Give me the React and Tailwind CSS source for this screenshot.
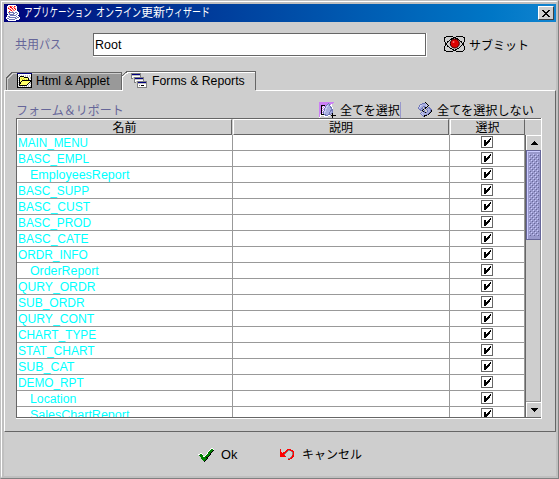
import { useLayoutEffect, useRef } from "react";

const FONT = "font-['Liberation_Sans','Noto_Sans_CJK_JP',sans-serif]";

// Text condensed or widened to occupy a given width.
function Fit({ w, className = "", children }) {
  const ref = useRef(null);
  useLayoutEffect(() => {
    const el = ref.current;
    el.style.transform = "none";
    el.style.transform = `scaleX(${w / el.offsetWidth})`;
  }, [w, children]);
  return (
    <span className={`block shrink-0 whitespace-pre ${className}`} style={{ width: w }}>
      <span ref={ref} className="inline-block origin-left">{children}</span>
    </span>
  );
}

// Pixel icon: one character per pixel, "." is transparent.
function Pixels({ rows, colors, className = "" }) {
  const w = Math.max(...rows.map((r) => r.length));
  return (
    <svg width={w} height={rows.length} viewBox={`0 0 ${w} ${rows.length}`} shapeRendering="crispEdges" className={`block shrink-0 ${className}`}>
      {rows.flatMap((row, y) =>
        [...row].map((c, x) => (colors[c] ? <rect key={`${x}-${y}`} x={x} y={y} width="1" height="1" fill={colors[c]} /> : null))
      )}
    </svg>
  );
}

const C = { k: "#000000", w: "#ffffff", r: "#ff0000", d: "#990000", g: "#008000", e: "#808080", b: "#000080", y: "#ffff66", o: "#cccc33", p: "#cc80f5", l: "#aab0e0", m: "#7078b8", n: "#ccd0f5", s: "#c0c0c0", i: "#ff8080" };

const JAVA = [
  "..wwwwwwww......",
  ".wwiriiwriw.....",
  ".wiwrrwiiww.....",
  ".wriwirwriw.....",
  ".wwirwiiwrw.....",
  ".wwwirwiiww.....",
  ".wwrwwiwwwww....",
  ".wemmmmmwmmww...",
  ".wwmwwwmmwwmw...",
  "..wmmmmmwwmww...",
  ".wwwmmmmmmww....",
  ".wmmwwwwwwmww...",
  "wwwmmmmmmmwmmw..",
  "wmmwwwwwwmmwww..",
  ".wwmmmmmmwwww...",
  "..wwwwwwww......",
];
const FOLDER = [
  "bbbbbbbbbbbbbbb",
  "kwwwwwwwwwwwwwk",
  "kwswswswswswswk",
  "kswkkkkwswswswk",
  "kwkyyyykkkkswsk",
  "kskyoyoyyyykwsk",
  "kwkyyoyoyoykswk",
  "kskyykkkkkkkkkk",
  "kwkykyyyyyyyykk",
  "kskkyyyyyyyyksk",
  "kwkkyyyyyyykwsk",
  "kskyyyyyyykwswk",
  "kwkkkkkkkkwswsk",
  "kswswswswswswsk",
  "kkkkkkkkkkkkkkk",
];
const FORMS = [
  "eeeeeeeeee......",
  "ebbbbbbbbe......",
  "esssssssse......",
  "ewwwwwwwwe......",
  "ew.eeeeeeeeee...",
  "ee.ebbbbbbbbe...",
  "...esssssssse...",
  "...ewwwwwwwwe...",
  "...ew.eeeeeeeeee",
  "...ee.ebbbbbbbbe",
  "......esssssssse",
  "......ewwwwwwwwe",
  "......ewewkkkwwe",
  "......ewwwwwwwwe",
  "......eeeeeeeeee",
];
const SELECT = [
  "ppppppppppppppp",
  "pppppppppmpppp.",
  "ppppppppmlmpw..",
  "ppkkkkpmnlmww..",
  "ppkpwpmnnllmw..",
  "ppkwpwmnlllmmw.",
  "ppkpwmnnllllmw.",
  "ppkwpmnlllllmm.",
  "ppkpwmnllllmmm.",
  "ppkwmnnllllmlm.",
  "ppkpmnllllmllm.",
  "ppkwmnllllmlmk.",
  "pwkkkmmllmmm.k.",
  "pwwwwwmmmww.kkkkk",
  "pw...wwww....k..",
  "w............k..",
];
const REFRESH = [
  ".......k.......",
  "....mmmlk......",
  "..mmllllnk.....",
  ".mnnllllnlk....",
  ".mnllmmlnk.....",
  "mnllm.mkk.mm...",
  "mllmm.mk.mlmm..",
  ".mmlmk..mlllmm.",
  "..mmk.m..mllmk.",
  "....mkm..mllmk.",
  "...mnlmkmllmk..",
  "..mnllllllmk...",
  "...mnlllmmk....",
  "....mlkkk......",
  ".....mk........",
];
const OK = [
  ".............ww.",
  "............wggw",
  "...........wgggk",
  "..........wgggk.",
  ".........wgggk..",
  "..ww.....wggk...",
  "wwggw...wgggk...",
  ".gggg..wgggk....",
  "..gggwwgggk.....",
  "...gggggkk......",
  "...ggggggk......",
  "....ggggk.......",
  ".....ggk........",
  "......k.........",
];
const UNDO = [
  "r......rrrr...",
  "r.....rreerrr.",
  "r....rre...err",
  "rr.rrre.....er",
  "rrrrre......er",
  "rrrre.......er",
  "rrrrr.......rr",
  "rrrrrr.....err",
  "..........err.",
  "........eerr..",
  "........rr....",
];
const CHECK = [
  "......k",
  ".....kk",
  "kk..kk.",
  "kk.kkk.",
  "kkkkk..",
  "kkkk...",
  "kkk....",
  "kk.....",
];
const CROSS = ["kk....kk", ".kk..kk.", "..kkkk..", "...kk...", "..kkkk..", ".kk..kk.", "kk....kk"];

function Atom() {
  return (
    <svg width="23" height="18" viewBox="0 0 23 18" className="block shrink-0" fill="none" stroke="#000">
      <g shapeRendering="crispEdges">
        <ellipse cx="11.5" cy="9" rx="11.5" ry="5.8" transform="rotate(32 11.5 9)" />
        <ellipse cx="11.5" cy="9" rx="11.5" ry="5.8" transform="rotate(-32 11.5 9)" />
      </g>
      <circle cx="11.8" cy="8.5" r="4.5" fill="#dd0000" stroke="#300" />
      <circle cx="10.5" cy="7" r="1" fill="#ff7070" stroke="none" />
    </svg>
  );
}

const ROWS = [
  ["MAIN_MENU", 70], ["BASC_EMPL", 71], ["EmployeesReport", 99, true], ["BASC_SUPP", 71], ["BASC_CUST", 72],
  ["BASC_PROD", 73], ["BASC_CATE", 70], ["ORDR_INFO", 70], ["OrderReport", 69, true], ["QURY_ORDR", 77],
  ["SUB_ORDR", 67], ["QURY_CONT", 76], ["CHART_TYPE", 78], ["STAT_CHART", 77], ["SUB_CAT", 56],
  ["DEMO_RPT", 66], ["Location", 46, true], ["SalesChartReport", 99, true],
];

function HeadCell({ className, label }) {
  return (
    <div className={`flex h-4 justify-center border-b border-l border-r border-t border-b-[#666] border-l-white border-r-[#666] border-t-white pt-px ${className}`}>
      <Fit w={24} className="leading-[14px]">{label}</Fit>
    </div>
  );
}

function ScrollButton({ up }) {
  return (
    <div className="flex h-[15px] w-[15px] shrink-0 items-center justify-center border-l border-t border-white bg-[#cecece]">
      <Pixels rows={up ? ["...k...", "..kkk..", ".kkkkk.", "kkkkkkk"] : ["kkkkkkk", ".kkkkk.", "..kkk..", "...k..."]} colors={C} />
    </div>
  );
}

export default function App() {
  return (
    <div className={`h-[479px] w-[559px] overflow-hidden border-b border-l border-r border-t border-b-[#808080] border-l-[#c0c0c0] border-r-[#808080] border-t-[#c0c0c0] text-[12px] leading-4 text-black ${FONT}`}>
      <div className="h-full border-b-2 border-l border-r-2 border-t border-b-[#c0c0c0] border-l-white border-r-[#c0c0c0] border-t-white bg-[#c0c0c0] pl-[2px] pt-[2px]">
        <div className="h-full bg-[#cecece]">
          <header className="flex h-[18px] items-center bg-linear-to-r from-[#00007b] to-[#1084d0] pl-[2px] text-white">
            <Pixels rows={JAVA} colors={C} />
            <div className="ml-[2px] flex leading-[18px]">
              <Fit w={68}>アプリケーション</Fit>
              <Fit w={45} className="ml-1">オンライン</Fit>
              <Fit w={24}>更新</Fit>
              <Fit w={45}>ウィザード</Fit>
            </div>
            <div className="ml-auto mr-[2px] flex h-[14px] w-4 items-center justify-center border-b border-l border-r border-t border-b-[#404040] border-l-white border-r-[#404040] border-t-white bg-[#cecece]">
              <Pixels rows={CROSS} colors={C} />
            </div>
          </header>

          <div className="mt-[11px] flex h-6 pl-[11px]">
            <div className="flex w-[78px] pt-1 text-[#666699]">
              <Fit w={24}>共用</Fit>
              <Fit w={22}>パス</Fit>
            </div>
            <div className="h-6 w-[334px] border-b border-r border-white">
              <div className="h-full border border-[#666] bg-white pl-px pt-[3px]">
                <Fit w={26}>Root</Fit>
              </div>
            </div>
            <div className="flex pl-4 pt-[2px]">
              <Atom />
              <Fit w={60} className="ml-[3px] mt-[3px]">サブミット</Fit>
            </div>
          </div>

          <div className="mt-[14px] flex h-[19px] items-end">
            <div className="relative ml-[2px] flex h-[18px] w-[116px] pl-[11px]">
              <svg width="116" height="18" className="absolute inset-0" shapeRendering="crispEdges">
                <path d="M0 18V6L6 0H116V18Z" fill="#999" />
                <path d="M.5 18V6L6 .5H115.5V18" fill="none" stroke="#666" />
                <path d="M1.5 18V7L7 1.5H115" fill="none" stroke="#cecece" />
              </svg>
              <Pixels rows={FOLDER} colors={C} className="relative mt-px" />
              <Fit w={74} className="relative ml-1 mt-px">Html &amp; Applet</Fit>
            </div>
            <div className="relative z-10 -mb-px flex h-5 w-[134px] pl-[9px] pt-[2px]">
              <svg width="134" height="20" className="absolute inset-0" shapeRendering="crispEdges">
                <path d="M0 20V6L6 0H134V20Z" fill="#cecece" />
                <path d="M.5 20V6L6 1.5H133" fill="none" stroke="#fff" />
                <path d="M0 5L5 .5H133.5V19" fill="none" stroke="#666" />
              </svg>
              <Pixels rows={FORMS} colors={C} className="relative" />
              <Fit w={93} className="relative ml-[5px]">Forms &amp; Reports</Fit>
            </div>
          </div>

          <main className="h-[342px] border-b border-l border-r border-t border-b-[#666] border-l-white border-r-[#666] border-t-white pl-[11px] pt-[11px]">
            <div className="flex h-4">
              <Fit w={108} className="pt-px text-[#666699]">フォーム＆リポート</Fit>
              <div className="ml-[195px] flex w-[82px] border-r border-[#9999cc]">
                <Pixels rows={SELECT} colors={C} />
                <Fit w={60} className="ml-1 pt-px">全てを選択</Fit>
              </div>
              <Pixels rows={REFRESH} colors={C} className="ml-[17px]" />
              <Fit w={97} className="ml-1 pt-px">全てを選択しない</Fit>
            </div>

            <div className="h-[301px] w-[526px] border-b border-r border-white">
              <div className="h-[300px] overflow-hidden border-b border-l border-t border-[#666]">
                <div className="flex h-4">
                  <HeadCell className="w-[215px]" label="名前" />
                  <HeadCell className="ml-px w-[216px]" label="説明" />
                  <HeadCell className="ml-px w-[75px]" label="選択" />
                  <div className="h-4 w-4 border-t border-white" />
                </div>
                <div className="flex h-[282px]">
                  <div className="h-[282px] w-[508px] overflow-hidden bg-white">
                    {ROWS.map(([name, w, child]) => (
                      <div key={name} className="flex h-4 border-b border-[#999]">
                        <div className={`h-4 w-[216px] border-r border-[#999] ${child ? "pl-[13px]" : "pl-px"}`}>
                          <Fit w={w} className="text-[#00ffff]">{name}</Fit>
                        </div>
                        <div className="h-4 w-[217px] border-r border-[#999]" />
                        <div className="h-4 w-[75px] border-r border-[#999] pl-[31px] pt-px">
                          <div className="h-3 w-3 border border-[#666] bg-white pl-[2px] pt-px">
                            <Pixels rows={CHECK} colors={C} />
                          </div>
                        </div>
                      </div>
                    ))}
                  </div>
                  <div className="flex w-4 flex-col border-l border-[#666]">
                    <ScrollButton up />
                    <div className="h-[90px] w-[15px] border border-[#666699] bg-[#9999cc]">
                      <div className="h-full border-l border-t border-[#ccccff] pl-px pt-[2px]">
                        <svg width="10" height="82" shapeRendering="crispEdges" className="block">
                          <defs>
                            <pattern id="bumps" width="4" height="4" patternUnits="userSpaceOnUse">
                              <path d="M0 0h1v1H0zM2 2h1v1H2z" fill="#ccccff" />
                              <path d="M1 1h1v1H1zM3 3h1v1H3z" fill="#666699" />
                            </pattern>
                          </defs>
                          <rect width="10" height="82" fill="url(#bumps)" />
                        </svg>
                      </div>
                    </div>
                    <div className="flex-1 border-r border-b border-[#999]" />
                    <ScrollButton />
                  </div>
                </div>
              </div>
            </div>
          </main>

          <footer className="flex pl-[194px] pt-4">
            <Pixels rows={OK} colors={C} />
            <Fit w={16} className="ml-[7px] -mt-px">Ok</Fit>
            <Pixels rows={UNDO} colors={C} className="ml-[43px] mt-px" />
            <Fit w={60} className="ml-[8px] -mt-px">キャンセル</Fit>
          </footer>
        </div>
      </div>
    </div>
  );
}
